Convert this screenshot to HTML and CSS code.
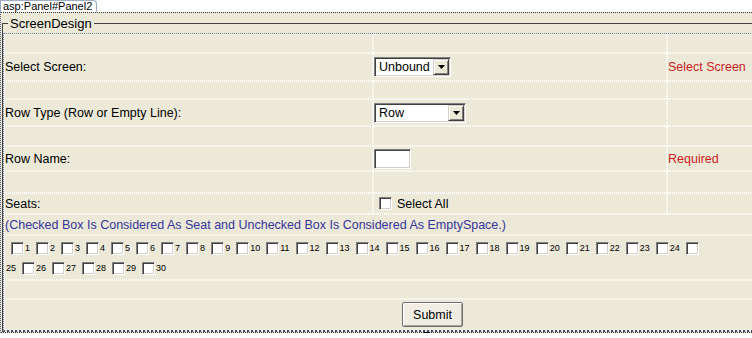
FILE: index.html
```html
<!DOCTYPE html>
<html lang="en">
<head>
    <meta charset="UTF-8" />
    <title>ScreenDesign</title>
    <link rel="stylesheet" href="styles.css">
</head>
<body>
<div class="tab">asp:Panel#Panel2</div>
<div class="panel">
    <fieldset class="screen-design">
        <legend>ScreenDesign</legend>
        <table class="layout">
            <colgroup>
                <col class="col-label">
                <col class="col-input">
                <col class="col-msg">
            </colgroup>
            <tr class="gap-1"><td></td><td></td><td></td></tr>
            <tr class="row-screen">
                <td>Select Screen:</td>
                <td>
                    <span class="dropdown dd-screen">
                        <select><option>Unbound</option></select>
                        <span class="arrow"><svg width="7" height="4" viewBox="0 0 7 4"><polygon points="0,0 7,0 3.5,4" fill="#000"/></svg></span>
                    </span>
                </td>
                <td class="error">Select Screen</td>
            </tr>
            <tr class="gap-2"><td></td><td></td><td></td></tr>
            <tr class="row-type">
                <td>Row Type (Row or Empty Line):</td>
                <td>
                    <span class="dropdown dd-type">
                        <select><option>Row</option><option>Empty Line</option></select>
                        <span class="arrow"><svg width="7" height="4" viewBox="0 0 7 4"><polygon points="0,0 7,0 3.5,4" fill="#000"/></svg></span>
                    </span>
                </td>
                <td></td>
            </tr>
            <tr class="gap-3"><td></td><td></td><td></td></tr>
            <tr class="row-name">
                <td>Row Name:</td>
                <td><input type="text" class="textbox"></td>
                <td class="error">Required</td>
            </tr>
            <tr class="gap-4"><td></td><td></td><td></td></tr>
            <tr class="row-seats">
                <td>Seats:</td>
                <td>
                    <span class="select-all">
                        <input type="checkbox" id="selectAll" class="check">
                        <label for="selectAll">Select All</label>
                    </span>
                </td>
                <td></td>
            </tr>
            <tr class="row-note">
                <td colspan="3" class="note">(Checked Box Is Considered As Seat and Unchecked Box Is Considered As EmptySpace.)</td>
            </tr>
            <tr class="row-list">
                <td colspan="3">
                    <div class="seats">
                        <input type="checkbox" id="s1"><label for="s1">1</label>
                        <input type="checkbox" id="s2"><label for="s2">2</label>
                        <input type="checkbox" id="s3"><label for="s3">3</label>
                        <input type="checkbox" id="s4"><label for="s4">4</label>
                        <input type="checkbox" id="s5"><label for="s5">5</label>
                        <input type="checkbox" id="s6"><label for="s6">6</label>
                        <input type="checkbox" id="s7"><label for="s7">7</label>
                        <input type="checkbox" id="s8"><label for="s8">8</label>
                        <input type="checkbox" id="s9"><label for="s9">9</label>
                        <input type="checkbox" id="s10"><label for="s10">10</label>
                        <input type="checkbox" id="s11"><label for="s11">11</label>
                        <input type="checkbox" id="s12"><label for="s12">12</label>
                        <input type="checkbox" id="s13"><label for="s13">13</label>
                        <input type="checkbox" id="s14"><label for="s14">14</label>
                        <input type="checkbox" id="s15"><label for="s15">15</label>
                        <input type="checkbox" id="s16"><label for="s16">16</label>
                        <input type="checkbox" id="s17"><label for="s17">17</label>
                        <input type="checkbox" id="s18"><label for="s18">18</label>
                        <input type="checkbox" id="s19"><label for="s19">19</label>
                        <input type="checkbox" id="s20"><label for="s20">20</label>
                        <input type="checkbox" id="s21"><label for="s21">21</label>
                        <input type="checkbox" id="s22"><label for="s22">22</label>
                        <input type="checkbox" id="s23"><label for="s23">23</label>
                        <input type="checkbox" id="s24"><label for="s24">24</label>
                        <input type="checkbox" id="s25"><span class="break"></span><label for="s25">25</label>
                        <input type="checkbox" id="s26"><label for="s26">26</label>
                        <input type="checkbox" id="s27"><label for="s27">27</label>
                        <input type="checkbox" id="s28"><label for="s28">28</label>
                        <input type="checkbox" id="s29"><label for="s29">29</label>
                        <input type="checkbox" id="s30"><label for="s30">30</label>
                    </div>
                </td>
            </tr>
            <tr class="gap-5"><td colspan="3"></td></tr>
            <tr class="row-submit">
                <td colspan="3" class="actions"><button type="button" class="submit">Submit</button></td>
            </tr>
        </table>
    </fieldset>
    <span class="handle"></span>
</div>
</body>
</html>
```

FILE: styles.css
```css
html, body {
    overflow: hidden;
}
body {
    margin: 0;
    background: #fff;
    font-family: "Liberation Sans", Arial, sans-serif;
    font-size: 12.5px;
    color: #000;
}
.tab {
    width: fit-content;
    height: 11px;
    line-height: 11px;
    font-size: 11px;
    padding: 0 4px 0 2px;
    border: 1px solid #9cacc4;
    border-bottom: none;
    border-radius: 0 4px 0 0;
}
.panel {
    position: relative;
    width: 850px;
    background: #ece9d8;
    border-top: 1px dotted #333;
    border-left: 1px dotted #55607a;
    border-bottom: 1px dotted #333;
    padding-left: 1px;
}
.screen-design {
    margin: 3px 0 0;
    padding: 2px 0 0;
    border: none;
    border-top: 1px solid #404040;
    border-left: 1px solid #404040;
    min-width: 0;
}
.screen-design legend {
    margin-left: 5px;
    padding: 0 2px;
    line-height: 15px;
    font-size: 13px;
}
.layout {
    width: 858px;
    table-layout: fixed;
    border-collapse: separate;
    border-spacing: 0;
    border-top: 1px dotted #6a7a9a;
    border-left: 1px dotted #6a7a9a;
    border-bottom: 2px dotted #3d4a6b;
}
.col-label { width: 369px; }
.col-input { width: 294px; }
.layout td {
    box-sizing: border-box;
    border: 1px dotted #fff;
    padding: 0;
    vertical-align: middle;
    white-space: nowrap;
}
.gap-1 td { height: 19px; }
.row-screen td { height: 28px; }
.gap-2 td { height: 18px; }
.row-type td { height: 27px; }
.gap-3 td { height: 20px; }
.row-name td { height: 25px; }
.gap-4 td { height: 22px; }
.row-seats td { height: 21px; }
.row-note td { height: 21px; }
.row-list td { height: 45px; }
.gap-5 td { height: 19px; }
.row-submit td { height: 31px; }

.error {
    color: #cc2222;
}
.note {
    color: #35359a;
}

.dropdown {
    display: inline-flex;
    vertical-align: middle;
    padding: 1px;
    background: #fff;
    border: 1px solid;
    border-color: #808080 #fff #fff #808080;
    box-shadow: inset 1px 1px 0 #404040, inset -1px -1px 0 #d4d0c8;
}
.dropdown select {
    appearance: none;
    -webkit-appearance: none;
    border: none;
    background: transparent;
    font: 12.5px "Liberation Sans", Arial, sans-serif;
    color: #000;
    height: 16px;
    line-height: 16px;
    padding: 0 0 0 3px;
    margin: 0;
    outline: none;
}
.dd-screen select { width: 57px; }
.dd-type select { width: 72px; }
.arrow {
    display: flex;
    align-items: center;
    justify-content: center;
    box-sizing: border-box;
    width: 16px;
    height: 16px;
    background: #ece9d8;
    border: 1px solid;
    border-color: #d4d0c8 #404040 #404040 #d4d0c8;
    box-shadow: inset 1px 1px 0 #fff, inset -1px -1px 0 #808080;
}
.textbox {
    box-sizing: border-box;
    width: 37px;
    height: 20px;
    margin: 0;
    padding: 0 2px;
    vertical-align: middle;
    background: #fff;
    border: 1px solid;
    border-color: #808080 #fff #fff #808080;
    box-shadow: inset 1px 1px 0 #404040, inset -1px -1px 0 #d4d0c8;
    outline: none;
}

.check,
.seats input {
    appearance: none;
    -webkit-appearance: none;
    box-sizing: border-box;
    width: 13px;
    height: 13px;
    margin: 0;
    background: #fff;
    border: 1px solid;
    border-color: #808080 #fff #fff #808080;
    box-shadow: inset 1px 1px 0 #404040, inset -1px -1px 0 #d4d0c8;
}
.select-all {
    display: inline-flex;
    align-items: center;
    vertical-align: middle;
}
.select-all .check {
    margin-left: 5px;
}
.select-all label {
    margin-left: 5px;
}

.seats {
    display: flex;
    flex-wrap: wrap;
    align-items: center;
    font-size: 9px;
    line-height: 20px;
    padding-top: 1px;
}
.seats input {
    margin-left: 6px;
}
.seats label {
    margin-left: 1px;
}
.seats .break {
    flex-basis: 100%;
    height: 0;
}

.actions {
    text-align: center;
}
.submit {
    box-sizing: border-box;
    width: 61px;
    height: 25px;
    padding: 0;
    font: 12.5px "Liberation Sans", Arial, sans-serif;
    color: #000;
    background: #f0eee4;
    border: 1px solid #707070;
    border-radius: 2px;
    box-shadow: inset 1px 1px 0 #fff, inset -1px -1px 0 #a8a498;
    vertical-align: middle;
}
.handle {
    position: absolute;
    left: 50%;
    bottom: -7px;
    width: 4px;
    height: 5px;
    margin-left: -3px;
    background: #fff;
    border: 1px solid #000;
}
```
